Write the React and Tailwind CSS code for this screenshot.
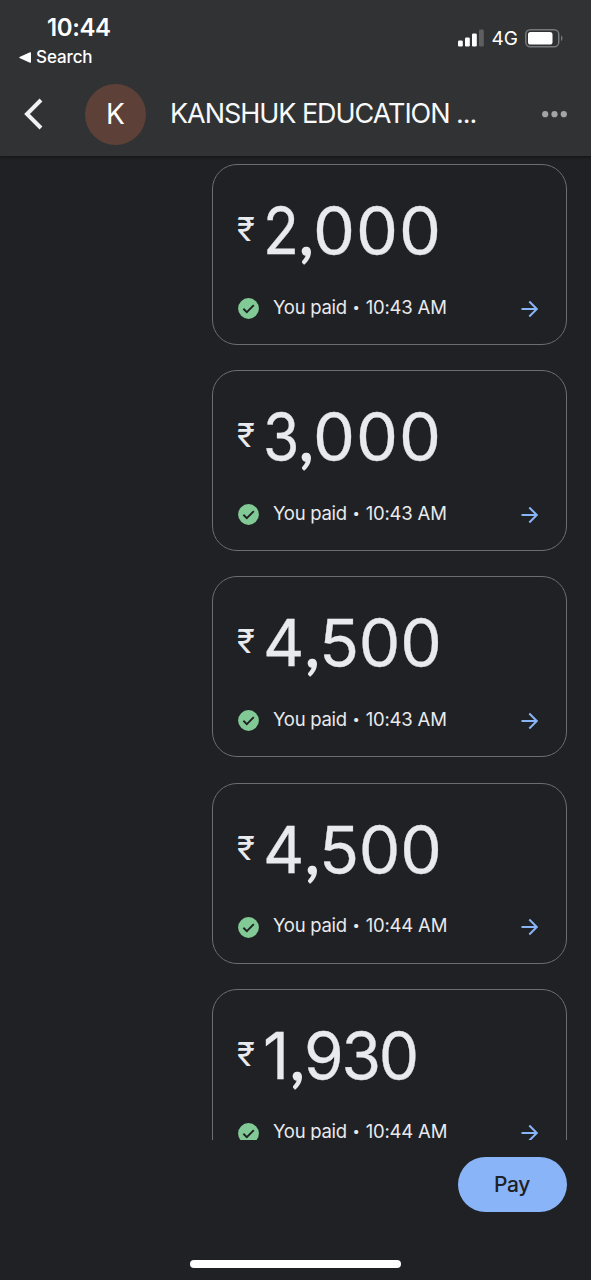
import React from 'react';

const payments = [
  { id: 1, lead: '2', rest: '000', time: '10:43 AM', leadClass: 'w-[36px] origin-left scale-x-[0.92]', restClass: 'tracking-[1px] scale-x-[1.04]' },
  { id: 2, lead: '3', rest: '000', time: '10:43 AM', leadClass: 'w-[36px] origin-left scale-x-[0.92]', restClass: 'tracking-[1px] scale-x-[1.04]' },
  { id: 3, lead: '4', rest: '500', time: '10:43 AM', leadClass: 'w-[42px]', restClass: 'tracking-[-0.2px] scale-x-[1.03]' },
  { id: 4, lead: '4', rest: '500', time: '10:44 AM', leadClass: 'w-[42px]', restClass: 'tracking-[-0.2px] scale-x-[1.03]' },
  { id: 5, lead: '1', rest: '930', time: '10:44 AM', leadClass: 'w-[27px]', restClass: 'tracking-[-2.2px]' },
];

function StatusBar() {
  return (
    <div className="flex justify-between h-[72px] pl-[19px] pr-7 text-white">
      <div className="pt-[14px]">
        <p className="pl-7 text-[24px] leading-7 font-semibold tracking-[-0.4px]">10:44</p>
        <div className="flex items-center gap-[5px] mt-1">
          <svg className="w-3 h-[11px]" viewBox="0 0 12 11" fill="currentColor">
            <path d="M0.5 5 11 0.3Q12 0 12 1V10Q12 11 11 10.7L0.5 6Q0 5.5 0.5 5Z" />
          </svg>
          <span className="text-[17px] leading-[22px] font-medium tracking-[-0.1px]">Search</span>
        </div>
      </div>

      <div className="flex items-center h-[22px] mt-[27px]">
        <svg className="w-[26px] h-[18px]" viewBox="0 0 26 18" fill="currentColor">
          <rect x="0" y="11.5" width="4.8" height="6" rx="1.2" />
          <rect x="7" y="8.5" width="4.8" height="9" rx="1.2" />
          <rect x="14" y="4.5" width="4.8" height="13" rx="1.2" />
          <rect x="21" y="0.5" width="4.8" height="17" rx="1.2" opacity="0.22" />
        </svg>
        <span className="ml-[8px] text-[19px] leading-[24px] pt-[2px]">4G</span>
        <svg className="ml-[7px] w-[38px] h-[19px]" viewBox="0 0 38 19" fill="none">
          <rect x="0.75" y="0.75" width="33" height="17" rx="4.5" stroke="#77787a" strokeWidth="1.5" />
          <rect x="3" y="3" width="24.5" height="12.5" rx="2.6" fill="#fff" />
          <path d="M36 6.5C38 7.5 38 11 36 12Z" fill="#77787a" />
        </svg>
      </div>
    </div>
  );
}

function Header() {
  return (
    <header className="relative z-10 h-[156px] shrink-0 bg-[#313234] shadow-[0_1px_3px_rgba(0,0,0,0.45)]">
      <StatusBar />
      <div className="flex items-center h-[84px] pl-6 pr-6">
        <svg className="w-[19px] h-[32px]" viewBox="0 0 19 32" fill="none" stroke="#f1f1f3" strokeWidth="4">
          <path d="M17 2 3 16 17 30" />
        </svg>
        <div className="flex items-center justify-center w-[61px] h-[61px] ml-[42px] rounded-full bg-[#5d4037] text-[28px] text-white">
          K
        </div>
        <h1 className="ml-[24px] text-[27px] text-[#f8f9fa] whitespace-nowrap tracking-[-1.05px]">
          KANSHUK EDUCATION ...
        </h1>
        <svg className="ml-auto w-[25px] h-[7px]" viewBox="0 0 25 7" fill="#a2a4a7">
          <circle cx="3.2" cy="3.2" r="3.1" />
          <circle cx="12.5" cy="3.2" r="3.1" />
          <circle cx="21.8" cy="3.2" r="3.1" />
        </svg>
      </div>
    </header>
  );
}

function PaymentCard({ payment }) {
  return (
    <div className="w-[355px] h-[181px] shrink-0 pl-[24px] pr-[27px] pt-[34px] rounded-[25px] border border-[#6a6d71]">
      <div className="flex text-[#e8eaed]">
        <span className="w-[26px] pt-[13px] text-[33px] leading-[34px]">₹</span>
        <div className="flex text-[64px] leading-[64px] [-webkit-text-stroke:0.3px]">
          <span className={payment.leadClass}>{payment.lead}</span>
          <span className="w-[14px] font-['Lato'] [-webkit-text-stroke:1.5px]">,</span>
          <span className={`origin-left ${payment.restClass}`}>{payment.rest}</span>
        </div>
      </div>
      <div className="flex items-center mt-[31px]">
        <svg className="w-[21px] h-[21px] ml-[1px] mt-[4px]" viewBox="0 0 21 21" fill="none">
          <circle cx="10.5" cy="10.5" r="10.4" fill="#81c995" />
          <path d="M5.4 10.8 8.8 14.1 15.8 7.1" stroke="#202124" strokeWidth="1.9" />
        </svg>
        <p className="flex items-center ml-[14px] text-[18.5px] leading-6 text-[#e8eaed] whitespace-nowrap">
          <span className="tracking-[-0.3px]">You paid</span>
          <span className="w-[19px] text-center text-[13px]">•</span>
          <span className="tracking-[-0.2px]">{payment.time}</span>
        </p>
        <svg className="ml-auto mt-[4px] w-[18px] h-[18px]" viewBox="0 0 18 18" fill="none" stroke="#8ab4f8" strokeWidth="2">
          <path d="M0.5 9H16M8.3 1.5 15.8 9 8.3 16.5" />
        </svg>
      </div>
    </div>
  );
}

function App() {
  return (
    <div className="flex flex-col w-[591px] h-[1280px] overflow-hidden bg-[#202124] font-['Inter',sans-serif]">
      <Header />

      <main className="flex flex-col items-end gap-[25.2px] h-[984px] shrink-0 pt-2 pr-6 overflow-hidden">
        {payments.map((payment) => (
          <PaymentCard key={payment.id} payment={payment} />
        ))}
      </main>

      <footer className="flex flex-col flex-1 pt-[17px]">
        <button className="self-end w-[109px] h-[55px] mr-[24.5px] rounded-full bg-[#8ab4f8] text-[21px] font-medium text-[#202124] tracking-[-0.3px]">
          Pay
        </button>
        <div className="w-[211px] h-2 mt-auto mb-3 mx-auto rounded-full bg-white" />
      </footer>
    </div>
  );
}

export default App;
